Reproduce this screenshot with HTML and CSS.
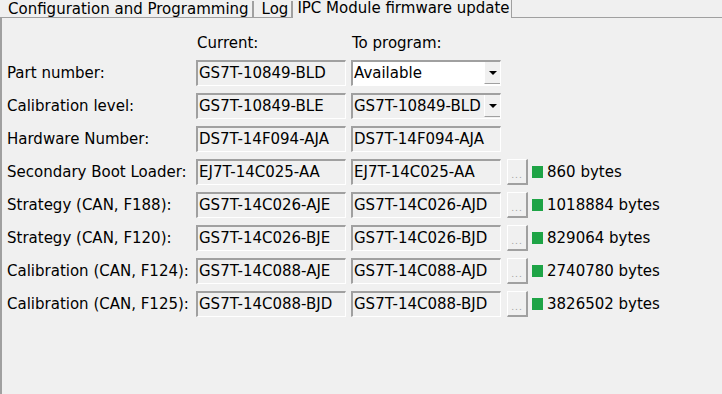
FILE: index.html
```html
<!DOCTYPE html>
<html lang="en">
<head>
  <meta charset="UTF-8" />
  <title>IPC Module firmware update</title>
  <link rel="stylesheet" href="styles.css">
</head>
<body>

  <div class="tabs">
    <div class="tab">Configuration and Programming</div>
    <div class="tab">Log</div>
    <div class="tab active">IPC Module firmware update</div>
    <div class="tab-fill"></div>
  </div>

  <div class="panel">
    <div class="grid">
      <div></div>
      <div class="head">Current:</div>
      <div class="head">To program:</div>
      <div></div><div></div><div></div>

      <div class="label">Part number:</div>
      <div class="field">GS7T-10849-BLD</div>
      <div class="field combo white">Available<span class="arrow"></span></div>
      <div></div><div></div><div></div>

      <div class="label">Calibration level:</div>
      <div class="field">GS7T-10849-BLE</div>
      <div class="field combo">GS7T-10849-BLD<span class="arrow"></span></div>
      <div></div><div></div><div></div>

      <div class="label">Hardware Number:</div>
      <div class="field">DS7T-14F094-AJA</div>
      <div class="field">DS7T-14F094-AJA</div>
      <div></div><div></div><div></div>

      <div class="label">Secondary Boot Loader:</div>
      <div class="field">EJ7T-14C025-AA</div>
      <div class="field">EJ7T-14C025-AA</div>
      <button class="browse">...</button>
      <div class="led"></div>
      <div class="size">860 bytes</div>

      <div class="label">Strategy (CAN, F188):</div>
      <div class="field">GS7T-14C026-AJE</div>
      <div class="field">GS7T-14C026-AJD</div>
      <button class="browse">...</button>
      <div class="led"></div>
      <div class="size">1018884 bytes</div>

      <div class="label">Strategy (CAN, F120):</div>
      <div class="field">GS7T-14C026-BJE</div>
      <div class="field">GS7T-14C026-BJD</div>
      <button class="browse">...</button>
      <div class="led"></div>
      <div class="size">829064 bytes</div>

      <div class="label">Calibration (CAN, F124):</div>
      <div class="field">GS7T-14C088-AJE</div>
      <div class="field">GS7T-14C088-AJD</div>
      <button class="browse">...</button>
      <div class="led"></div>
      <div class="size">2740780 bytes</div>

      <div class="label">Calibration (CAN, F125):</div>
      <div class="field">GS7T-14C088-BJD</div>
      <div class="field">GS7T-14C088-BJD</div>
      <button class="browse">...</button>
      <div class="led"></div>
      <div class="size">3826502 bytes</div>
    </div>
  </div>

</body>
</html>
```

FILE: styles.css
```css
* {
  margin: 0;
  padding: 0;
  box-sizing: border-box;
  font-family: "DejaVu Sans", sans-serif;
}

body {
  width: 722px;
  height: 394px;
  overflow: hidden;
  background-color: #f0f0f0;
  color: #000;
  font-size: 15px;
}

.tabs {
  display: flex;
  height: 18px;
  align-items: flex-end;
}

.tab {
  height: 17px;
  line-height: 16px;
  padding: 0 3px 0 8px;
  background-color: #f0f0f0;
  border-right: 2px solid #a0a0a0;
  border-bottom: 1px solid #a0a0a0;
  white-space: nowrap;
}

.tab.active {
  height: 18px;
  line-height: 16px;
  padding: 0 1px 0 4px;
  border-bottom: none;
  border-right: 1px solid #a0a0a0;
  background-color: #f0f0f0;
}

.tab-fill {
  flex: 1;
  height: 1px;
  background-color: #a0a0a0;
}

.panel {
  height: 376px;
  border-left: 2px solid #a0a0a0;
  padding: 16px 0 0 5px;
}

.grid {
  display: grid;
  grid-template-columns: 184px 150px 150px 21px 11px auto;
  grid-template-rows: 19px repeat(8, 26px);
  column-gap: 5px;
  row-gap: 7px;
  align-items: center;
}

.grid > :nth-child(6n+4) {
  margin-left: 1px;
}

.head {
  padding-left: 1px;
  line-height: 19px;
}

.label {
  white-space: nowrap;
}

.field {
  height: 26px;
  line-height: 22px;
  padding-left: 1px;
  border-top: 2px solid #a0a0a0;
  border-left: 2px solid #a0a0a0;
  border-right: 1px solid #fff;
  border-bottom: 1px solid #fff;
  background-color: #f0f0f0;
  white-space: nowrap;
  overflow: hidden;
  position: relative;
}

.field.white {
  background-color: #fff;
}

.combo .arrow {
  position: absolute;
  right: 0;
  top: 0;
  width: 16px;
  height: 22px;
  background-color: #f0f0f0;
  border-left: 1px solid #fff;
  border-bottom: 1px solid #a0a0a0;
}

.combo .arrow::after {
  content: "";
  position: absolute;
  left: 4px;
  top: 9px;
  border-left: 4px solid transparent;
  border-right: 4px solid transparent;
  border-top: 4px solid #000;
}

.browse {
  width: 21px;
  height: 26px;
  border-top: 1px solid #fff;
  border-left: 1px solid #fff;
  border-right: 2px solid #a0a0a0;
  border-bottom: 2px solid #a0a0a0;
  background-color: #f0f0f0;
  color: #a0a0a0;
  font-size: 9px;
  line-height: 30px;
  letter-spacing: 1px;
}

.led {
  width: 11px;
  height: 12px;
  background-color: #1ea446;
}

.size {
  margin-left: -1px;
  white-space: nowrap;
}
```
